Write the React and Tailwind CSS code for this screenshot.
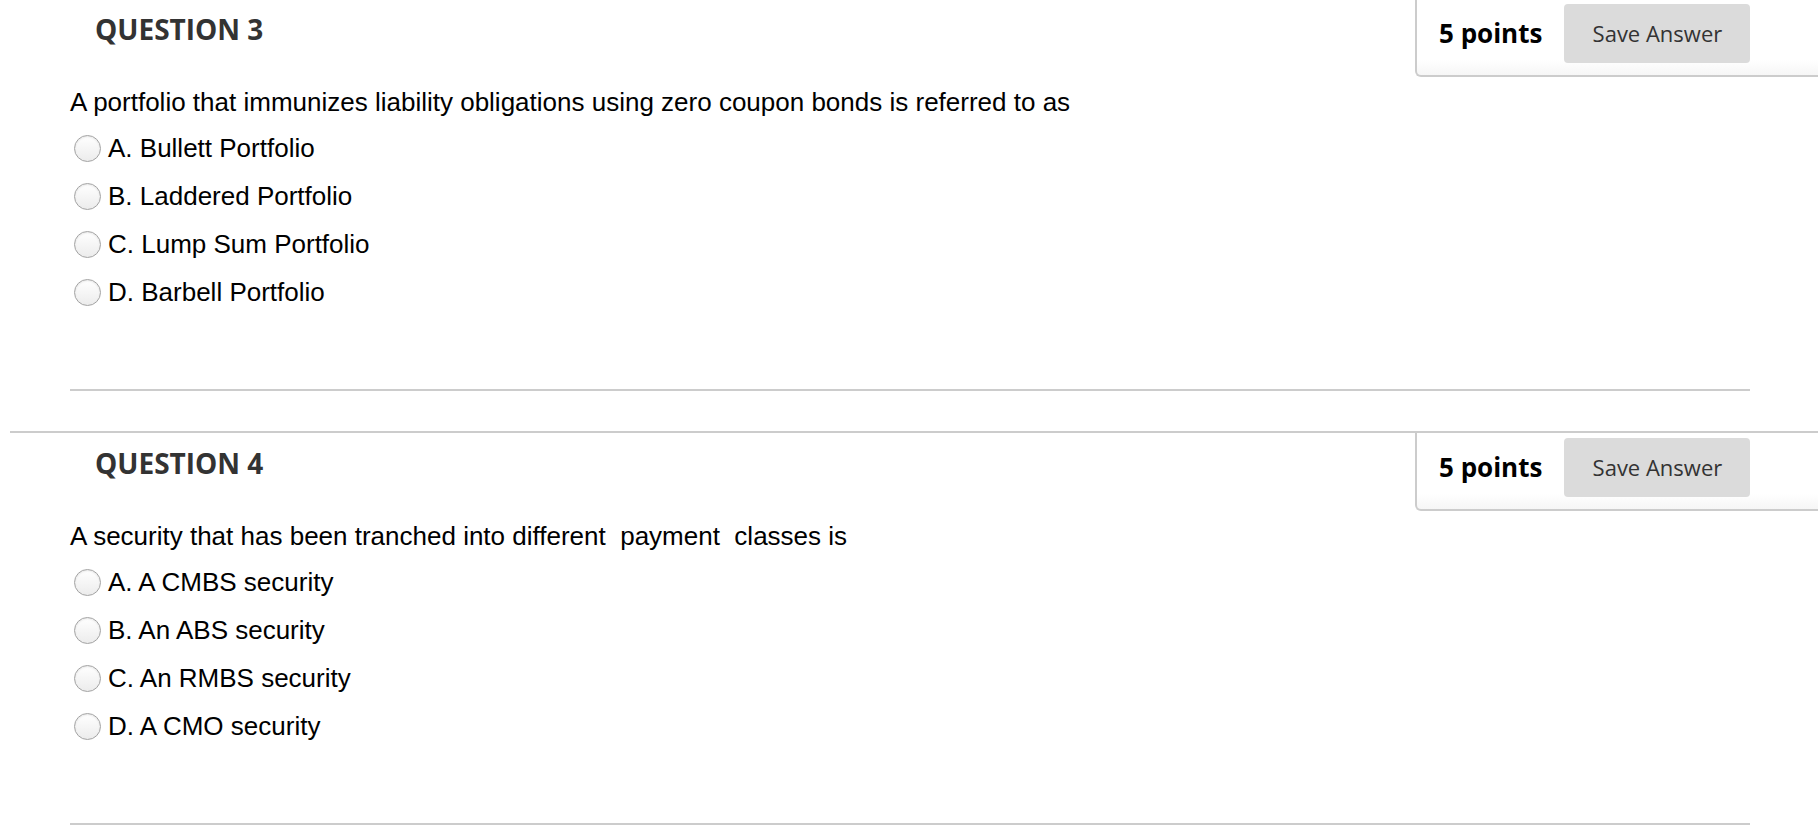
const questions = [
  {
    number: 3,
    points: 5,
    text: "A portfolio that immunizes liability obligations using zero coupon bonds is referred to as",
    options: [
      "A. Bullett Portfolio",
      "B. Laddered Portfolio",
      "C. Lump Sum Portfolio",
      "D. Barbell Portfolio",
    ],
  },
  {
    number: 4,
    points: 5,
    text: "A security that has been tranched into different\u00a0 payment\u00a0 classes is",
    options: [
      "A. A CMBS security",
      "B. An ABS security",
      "C. An RMBS security",
      "D. A CMO security",
    ],
  },
];

function Radio() {
  return (
    <span className="w-[27px] h-[27px] rounded-full border border-[#a3a3a3] bg-linear-to-b from-white to-[#ececec] shadow-[inset_0_1px_2px_rgba(0,0,0,0.1)] shrink-0" />
  );
}

function Question({ q }) {
  return (
    <div className="ml-[10px] h-[434px] border-t-2 border-[#cccccc] flex flex-col">
      {/* header row */}
      <div className="flex justify-between items-start">
        <h2
          className="mt-[11px] pl-[85px] text-[28px] leading-[38px] font-bold text-[#333333]"
          style={{ fontFamily: '"Open Sans", sans-serif' }}
        >
          QUESTION {q.number}
        </h2>
        <div
          className="w-[403px] h-[78px] border-l-2 border-b-2 border-[#cccccc] rounded-bl-[6px] bg-linear-to-b from-white from-80% to-[#f6f6f6] flex items-start pt-[5px] pl-[22px] gap-[22px]"
          style={{ fontFamily: '"Open Sans", sans-serif' }}
        >
          <span className="h-[59px] flex items-center text-[26px] font-bold text-black">
            {q.points} points
          </span>
          <button className="w-[186px] h-[59px] bg-[#dbdbdb] rounded-[4px] text-[22px] text-[#333333] flex items-center justify-center">
            Save Answer
          </button>
        </div>
      </div>

      <div
        className="pl-[60px] text-black"
        style={{ fontFamily: '"Liberation Sans", Arial, sans-serif' }}
      >
        <p className="mt-[9px] text-[26px] leading-[32px] whitespace-pre">{q.text}</p>
        <ul className="mt-[6px]">
          {q.options.map((opt, i) => (
            <li key={i} className="h-[48px] flex items-center gap-[7px] pl-[4px] text-[26px]">
              <Radio />
              <span>{opt}</span>
            </li>
          ))}
        </ul>
      </div>

      <div className="mt-[73px] ml-[60px] w-[1680px] h-[2px] bg-[#cccccc]" />
    </div>
  );
}

export default function App() {
  return (
    <div className="w-[1818px] h-[834px] overflow-hidden bg-white">
      <div className="mt-[-3px]">
        {questions.map((q) => (
          <Question key={q.number} q={q} />
        ))}
      </div>
    </div>
  );
}
